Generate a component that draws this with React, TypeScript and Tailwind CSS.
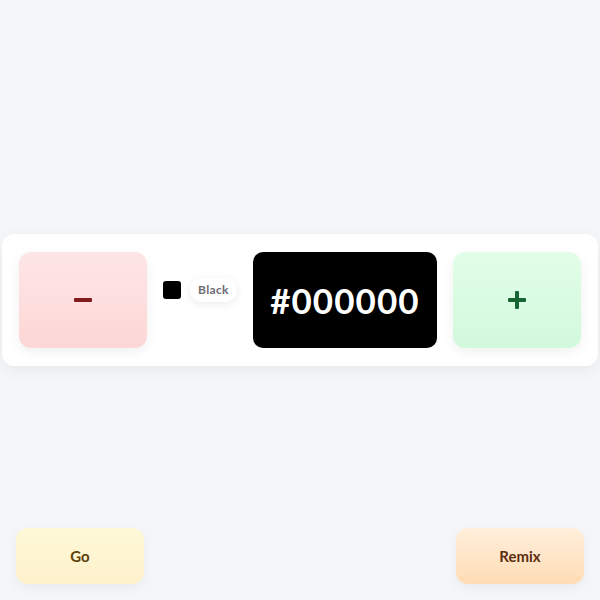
import React from "react";

export default function App() {
  return (
    <div
      className="relative h-screen w-full bg-[#f5f6f8]"
      style={{ fontFamily: "Lato, 'Open Sans', sans-serif" }}
    >
      <div className="h-full flex items-center justify-center px-[2px]">
        <div className="w-full bg-white rounded-[12px] shadow-[0_4px_16px_rgba(0,0,0,0.06)] px-[17px] py-[18px] flex items-center gap-4">
          <button className="shrink-0 w-[128px] h-[96px] rounded-[12px] bg-gradient-to-b from-[#fee6e6] to-[#fdd6d6] shadow-[0_4px_12px_rgba(0,0,0,0.06)] flex items-center justify-center">
            <span className="block w-[18px] h-[4px] rounded-[1px] bg-[#7f1d1d]" />
          </button>
          <div className="flex items-center gap-[9px] pb-[20px]">
            <span className="shrink-0 block w-[18px] h-[18px] rounded-[3px] bg-black" />
            <span className="h-[24px] px-[8px] rounded-full bg-white shadow-[0_2px_8px_rgba(0,0,0,0.08)] flex items-center text-[12px] font-bold text-[#6b6b75] tracking-[0.03em]">
              Black
            </span>
          </div>
          <div className="shrink-0 w-[184px] h-[96px] rounded-[10px] bg-black flex items-center justify-center">
            <span className="text-white text-[35px] font-bold tracking-[0.03em] leading-none">
              #000000
            </span>
          </div>
          <button className="shrink-0 w-[128px] h-[96px] rounded-[12px] bg-gradient-to-b from-[#e2fde9] to-[#d1f9dc] shadow-[0_4px_12px_rgba(0,0,0,0.06)] flex items-center justify-center">
            <svg width="18" height="18" viewBox="0 0 18 18">
              <rect x="7" y="0" width="4" height="18" rx="1" fill="#166534" />
              <rect x="0" y="7" width="18" height="4" rx="1" fill="#166534" />
            </svg>
          </button>
        </div>
      </div>
      <div className="absolute inset-x-0 bottom-0 flex justify-between px-4 pb-4">
        <button className="w-[128px] h-[56px] rounded-[12px] bg-gradient-to-b from-[#fef9d7] to-[#fef1cc] shadow-[0_4px_12px_rgba(0,0,0,0.05)] text-[#5c4008] font-bold text-[15px]">
          Go
        </button>
        <button className="w-[128px] h-[56px] rounded-[12px] bg-gradient-to-b from-[#ffefdc] to-[#fedcb4] shadow-[0_4px_12px_rgba(0,0,0,0.05)] text-[#5c2d0e] font-bold text-[15px]">
          Remix
        </button>
      </div>
    </div>
  );
}
